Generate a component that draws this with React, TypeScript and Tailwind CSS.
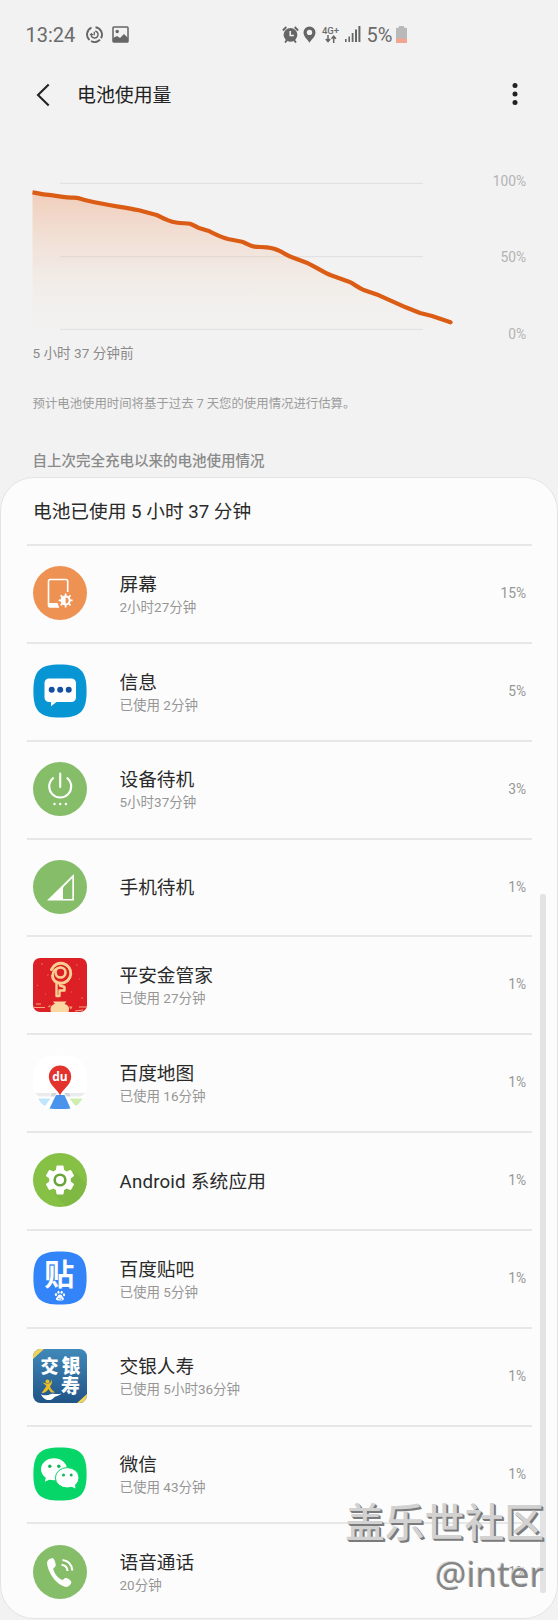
import React from "react";
import { MdSettings } from "react-icons/md";

type Usage = {
  name: string;
  detail?: string;
  percent: string;
  icon: React.ReactNode;
};

const SQUIRCLE = "M27 .4C47.3 .4 53.6 6.7 53.6 27S47.3 53.6 27 53.6 .4 47.3 .4 27 6.7 .4 27 .4Z";

function IconBox({ children }: { children: React.ReactNode }) {
  return (
    <svg viewBox="0 0 54 54" className="w-[54px] h-[54px] mb-[1.5px] block overflow-visible">
      {children}
    </svg>
  );
}

function ScreenIcon() {
  return (
    <IconBox>
      <circle cx="27" cy="27" r="27" fill="#ee9254" />
      <path d="M34.7 26V15.3a1.8 1.8 0 0 0-1.8-1.8H17.3a1.8 1.8 0 0 0-1.8 1.8v23.6a1.8 1.8 0 0 0 1.8 1.8H26" fill="none" stroke="#fff" strokeWidth="1.6" />
      <path d="M15 37h9.5l1.5 4.4h-9a2 2 0 0 1-2-2z" fill="#fff" />
      <g transform="translate(32.6 34.4)">
        <path d="M0-7v14M-7 0H7M-5-5 5 5M5-5-5 5" stroke="#fff" strokeWidth="1.7" />
        <circle r="5" fill="#fff" />
        <path d="M0-3a3 3 0 0 1 0 6z" fill="#ee9254" />
      </g>
    </IconBox>
  );
}

function MessageIcon() {
  return (
    <IconBox>
      <path d={SQUIRCLE} fill="#0795d3" />
      <path d="M16 14.5h22.5a4.5 4.5 0 0 1 4.5 4.5v14.5a4.5 4.5 0 0 1-4.5 4.5H23.5l-5.5 4.3v-4.3h-2a4.5 4.5 0 0 1-4.5-4.5V19a4.5 4.5 0 0 1 4.5-4.5z" fill="#fff" />
      <g fill="#1350a0">
        <circle cx="18.7" cy="25.8" r="3" />
        <circle cx="27.2" cy="25.8" r="3" />
        <circle cx="35.7" cy="25.8" r="3" />
      </g>
    </IconBox>
  );
}

function PowerIcon() {
  return (
    <IconBox>
      <circle cx="27" cy="27" r="27" fill="#86bd69" />
      <path d="M27.2 11.5v13.5M20 16.2a11 11 0 1 0 14.4 0" fill="none" stroke="#fff" strokeWidth="2.1" strokeLinecap="round" />
      <g fill="#fff">
        <circle cx="21.5" cy="42" r="1.2" />
        <circle cx="27.2" cy="42" r="1.2" />
        <circle cx="32.9" cy="42" r="1.2" />
      </g>
    </IconBox>
  );
}

function CellIcon() {
  return (
    <IconBox>
      <circle cx="27" cy="27" r="27" fill="#86bd69" />
      <path d="M14 40.5 41 14v26.5z" fill="#fff" />
      <path d="M30 27.5 39.3 18v21H30z" fill="#86bd69" />
    </IconBox>
  );
}

function PinganIcon() {
  return (
    <IconBox>
      <clipPath id="pingan"><rect width="54" height="54" rx="7" /></clipPath>
      <g clipPath="url(#pingan)">
        <rect width="54" height="54" fill="#dc2026" />
        <g fill="none" stroke="#f9ce92" strokeLinejoin="round" strokeLinecap="round">
          <path d="M18.500 11.500a10 10 0 1 1 9.500 13.700c-5 0-8.500-3.200-8.500-7.500" strokeWidth="3" />
          <circle cx="27.500" cy="14.500" r="5" strokeWidth="2.6" />
          <path d="M19.500 18c0-5 3-8 8-8.500" strokeWidth="2.2" />
          <path d="M23.500 24.500v13.500h3v-5.500h5V29l-4.500-1.500v-2.500" strokeWidth="2.4" />
        </g>
        <path d="M18 54c-1.500-4 .5-7.500 4-8l-2-2.500h13.500L31.500 46c4 1 5.500 4 4 8z" fill="#fbd8a1" />
        <path d="M17.5 47.5l-2 1.5M36 49h2.5l-1 2M0 49.5h12M3 46h5M42 53l8-1M46 49h8" stroke="#f4a77d" strokeWidth="1.2" fill="none" />
        <path d="M8 6h2M43 7h1.500M4 27.500h1M14 17h1.500M12 36h1M46 21h1M48 40h2M38 34h1" stroke="#f26c58" strokeWidth="1" />
      </g>
    </IconBox>
  );
}

function MapIcon() {
  return (
    <IconBox>
      <path d={SQUIRCLE} fill="#fff" />
      <path d="M1.5 38h17l-2.5 3.5H6zM36 38h16.500l-5 3.500h-9z" fill="#e9ebec" />
      <path d="M19 38h5l-3 3.500h-4zM31 38h5l2 3.500h-4.500z" fill="#d2d5d8" />
      <path d="M5 43.500h12.500L12 51c-3-1.500-5-4-7-7.500z" fill="#bfe6fb" />
      <path d="M36.500 43.500h13c-2 3.500-4 6-7 7.500z" fill="#cdeeb0" />
      <path d="M23 40h8.500L37.500 53.500C32 54.200 22 54.200 16.500 53.500z" fill="#4a93ec" />
      <path d="M27 41c-1-6-11.200-10.500-11.200-19.300a11.200 11.200 0 0 1 22.400 0C38.200 30.500 28 35 27 41z" fill="#e2332e" />
      <text x="27" y="26" textAnchor="middle" className="font-['Open_Sans',sans-serif] text-[12px] font-bold" fill="#fff">du</text>
    </IconBox>
  );
}

function GearIcon() {
  return (
    <IconBox>
      <circle cx="27" cy="27" r="27" fill="#86c044" />
      <path d="M21 41 33 53.3A27 27 0 0 0 53.500 31L41 18z" fill="#7fb843" />
      <g transform="translate(9 9)"><MdSettings size={36} color="#fff" /></g>
      <circle cx="27" cy="27" r="6.6" fill="#6ba539" />
      <circle cx="27" cy="27" r="4" fill="#fff" />
    </IconBox>
  );
}

function TiebaIcon() {
  return (
    <IconBox>
      <path d={SQUIRCLE} fill="#3384f8" />
      <text x="26.3" y="33.5" textAnchor="middle" className="font-['Noto_Sans_CJK_SC',sans-serif] text-[30px] font-bold" fill="#fff">贴</text>
      <g fill="#fff">
        <ellipse cx="23" cy="43.5" rx="1.2" ry="1.6" />
        <ellipse cx="25.5" cy="41.2" rx="1.1" ry="1.5" />
        <ellipse cx="28.7" cy="41.2" rx="1.1" ry="1.5" />
        <ellipse cx="31" cy="43.8" rx="1.1" ry="1.5" />
        <path d="M27 43.6c2 0 2 1.800 3.200 3 1.500 1.500.5 3-1.500 2.800h-3.600c-2 .2-3-1.300-1.500-2.800C25 45.400 25 43.600 27 43.600z" />
      </g>
      <path d="M25.3 47.5h1v1M28 46.5v2h1.2" stroke="#3384f8" strokeWidth=".7" fill="none" />
    </IconBox>
  );
}

function BocommIcon() {
  return (
    <IconBox>
      <defs>
        <linearGradient id="bocomm" x1="0" y1="0" x2="0" y2="1">
          <stop offset="0" stopColor="#4089b9" />
          <stop offset="1" stopColor="#215487" />
        </linearGradient>
        <clipPath id="bocommClip"><rect width="54" height="54" rx="7.5" /></clipPath>
      </defs>
      <g clipPath="url(#bocommClip)">
        <rect width="54" height="54" fill="url(#bocomm)" />
        <path d="M0 0h11L0 10zM54 54H44l10-9z" fill="#f0d35c" />
        <g className="font-['Noto_Sans_CJK_SC',sans-serif] font-black" fill="#fff">
          <text x="7.5" y="23.5" className="text-[18px]">交</text>
          <text x="28.5" y="24" className="text-[19px]">银</text>
          <text x="28" y="43.5" className="text-[19px]">寿</text>
        </g>
        <path d="M8 45c3 2.500 7 1 10 0 3.500-1 5 1 10.500-.5-3 3-5.500 2-7.500 4-3.500 4.500-10.500 3-13-3.500z" fill="#fff" />
        <circle cx="14.500" cy="32.500" r="2" fill="#eabd25" />
        <path d="M19 30c.5 4-1 6-2 7.500 1 3 3 4.500 5 6h-4l-2.500-3.500c-2 3-4.500 4.500-7 4l5-7-4-3.500 5 1.300c2.500-.3 4-2 4.500-4.800z" fill="#eabd25" />
      </g>
    </IconBox>
  );
}

function WechatIcon() {
  return (
    <IconBox>
      <path d={SQUIRCLE} fill="#05d667" />
      <path d="M13 30l-1.200 4.800 6-2.800z" fill="#fff" />
      <ellipse cx="21" cy="22.3" rx="13" ry="11" fill="#fff" />
      <ellipse cx="34.2" cy="30.8" rx="11.8" ry="10.2" fill="#fff" stroke="#05d667" strokeWidth="1" />
      <path d="M38 39.5l4.5 2-.8-5z" fill="#fff" />
      <g fill="#12b55c">
        <circle cx="16.8" cy="19.3" r="1.7" />
        <circle cx="25.8" cy="19.3" r="1.7" />
        <circle cx="30.5" cy="28" r="1.5" />
        <circle cx="38.2" cy="28" r="1.5" />
      </g>
    </IconBox>
  );
}

function CallIcon() {
  return (
    <IconBox>
      <circle cx="27" cy="27" r="27" fill="#86bd69" />
      <path d="M15.5 14.8c1.5-1.3 3-1.8 4.200-1.500 1.300.3 2.300 2.800 2.900 5.500.4 1.900 0 2.700-1 3.400-1.200.8-1.500 1.600-1.100 2.800 1.300 4 4 7.500 7.600 9.500 1 .6 1.900.4 2.800-.6.900-1.100 1.900-1.300 3.300-.6 2 1 3.800 2.500 4.100 3.600.3 1-1.200 3.400-3.300 4.600-1.700.9-4 .4-7-1.400C21.500 36.200 16.500 29 14.500 21c-.8-3.200-.4-5 1-6.200z" fill="#fff" />
      <path d="M28.500 19.800c3.500.3 5.700 2.600 6 6.200M29.500 15c5.700.7 9.300 4.500 9.800 10.500" fill="none" stroke="#fff" strokeWidth="2.1" />
    </IconBox>
  );
}

const usages: Usage[] = [
  { name: "屏幕", detail: "2小时27分钟", percent: "15%", icon: <ScreenIcon /> },
  { name: "信息", detail: "已使用 2分钟", percent: "5%", icon: <MessageIcon /> },
  { name: "设备待机", detail: "5小时37分钟", percent: "3%", icon: <PowerIcon /> },
  { name: "手机待机", percent: "1%", icon: <CellIcon /> },
  { name: "平安金管家", detail: "已使用 27分钟", percent: "1%", icon: <PinganIcon /> },
  { name: "百度地图", detail: "已使用 16分钟", percent: "1%", icon: <MapIcon /> },
  { name: "Android 系统应用", percent: "1%", icon: <GearIcon /> },
  { name: "百度贴吧", detail: "已使用 5分钟", percent: "1%", icon: <TiebaIcon /> },
  { name: "交银人寿", detail: "已使用 5小时36分钟", percent: "1%", icon: <BocommIcon /> },
  { name: "微信", detail: "已使用 43分钟", percent: "1%", icon: <WechatIcon /> },
  { name: "语音通话", detail: "20分钟", percent: "1%", icon: <CallIcon /> },
];

function StatusBar() {
  return (
    <div className="h-[68px] pl-[25.5px] flex items-center text-[20px] leading-none text-[#6b6b6b]">
      <span className="w-[60px] pt-[1px]">13:24</span>
      <svg viewBox="0 0 17 17" className="w-[17px] h-[17px]" fill="none" stroke="#666" strokeWidth="1.9">
        <path d="M5.5 1.7A7.400 7.400 0 0 0 3.500 14M5 15a7.400 7.400 0 0 0 9-1.300M15 12.200A7.400 7.400 0 0 0 9.500 1.200" />
        <path d="M9.3 5a3.6 3.6 0 1 1-4 5.2" strokeWidth="1.5" />
        <path d="M8.3 9.2V5.8M3.8 8.7h3.4M5.5 7v3.4" strokeWidth="1.3" />
      </svg>
      <svg viewBox="0 0 17 17" className="w-[17px] h-[17px] ml-[9px]">
        <rect x="1" y="1" width="15" height="15" rx=".8" fill="none" stroke="#666" strokeWidth="1.5" />
        <circle cx="5.2" cy="5.5" r="1.7" fill="#666" />
        <path d="M1 16v-4l4-2 3 2 4-4 4 4V16z" fill="#666" />
      </svg>
      <svg viewBox="0 0 17 17" className="w-[17px] h-[17px] ml-[153.5px]">
        <path d="M.9 4.5 4.3 1M16.1 4.5 12.7 1M3 16.5l2-2.500M14 16.500 12 14" stroke="#666" strokeWidth="1.9" />
        <circle cx="8.5" cy="8.8" r="6.9" fill="#666" />
        <path d="M8.2 5v4.5h3.7" fill="none" stroke="#f2f2f2" strokeWidth="1.5" />
      </svg>
      <svg viewBox="0 0 13 17" className="w-[13px] h-[17px] ml-[4px]">
        <path fillRule="evenodd" d="M6.500.4a6 6 0 0 1 6 6.100c0 4-4 7-6 10.200C4.500 13.500.5 10.500.5 6.500a6 6 0 0 1 6-6.100zm0 3.300a2.700 2.700 0 1 0 0 5.400 2.700 2.700 0 0 0 0-5.400z" fill="#666" />
      </svg>
      <div className="ml-[6px] w-[17px] flex flex-col items-center">
        <span className="text-[9.5px] leading-[9px] font-medium">4G+</span>
        <svg viewBox="0 0 12 8" className="w-[12px] h-[8px]" fill="none" stroke="#666" strokeWidth="1.5">
          <path d="M3 0v6.5M.8 4l2.200 2.500L5.200 4M8.700 8V1.200M6.500 3.700l2.200-2.500 2.200 2.500" />
        </svg>
      </div>
      <svg viewBox="0 0 16 16" className="w-[16px] h-[16px] ml-[5.5px]" fill="#666">
        <path d="M0 13h1.600v3H0zM3.400 10.500H5V16H3.400zM6.700 7h1.800v9H6.700zM10 3.500h2V16h-2zM13.400 0h2v16h-2z" />
      </svg>
      <span className="ml-[6px] pt-[2px] w-[26px]">5%</span>
      <svg viewBox="0 0 11 17" className="w-[11px] h-[17px] ml-[3.5px]">
        <path d="M3 0h5v1.8h2a1 1 0 0 1 1 1V17H0V2.800a1 1 0 0 1 1-1h2z" fill="#b9b9b9" />
        <path d="M0 12.5h11V17H0z" fill="#f1a590" />
      </svg>
    </div>
  );
}

const level = "M32.5 192.3C38 193 42 194.4 46 194.7C58 196 66 197.7 74 197.7C80 198 84 200 89 201C106 205 123 207 139 210.3L156.5 215C160 216.5 162 218 165.5 219.3C170 221 172 222 176 222.5C182 223.5 186 223 190 223.7C194 225 196 227 199 228L208 230.7C214 233.5 220 237 228 239L242 241.7C246 243 250 246 254.5 246.7C259 247.3 262 246.7 267 247.3C272 248 276 249 279 250.7C284 253 288 256 292 257.3L308 263.3C316 267 323 272 331 275.3L349 281.7C354 284 358 287.5 363 289.7L379 295.3L405.7 307.3L420 313L432 316L450.5 322.3";

function BatteryChart() {
  return (
    <div className="relative h-[220px]">
      <svg viewBox="0 150 558 220" className="w-[558px] h-[220px] block">
        <defs>
          <linearGradient id="level" x1="0" y1="192" x2="0" y2="328" gradientUnits="userSpaceOnUse">
            <stop offset="0" stopColor="#f0996c" stopOpacity=".42" />
            <stop offset="1" stopColor="#efe9d8" stopOpacity="0.05" />
          </linearGradient>
        </defs>
        <path d="M60 183.3h363M60 256.7h363M60 329.3h363" stroke="#e2e2e2" strokeWidth="1.3" />
        <path d={level + "V328H32.5Z"} fill="url(#level)" />
        <path d={level} fill="none" stroke="#da5c15" strokeWidth="4.2" strokeLinejoin="round" />
        <circle cx="450.5" cy="322.3" r="2.1" fill="#da5c15" />
      </svg>
      <div className="absolute right-[32px] top-[22.5px] h-[169px] flex flex-col justify-between items-end text-[13.8px] leading-[16px] text-[#b2b2b2]">
        <span>100%</span>
        <span>50%</span>
        <span>0%</span>
      </div>
      <div className="absolute left-[32.5px] top-[192.5px] text-[13.6px] leading-[20px] text-[#8a8a8a]">5 小时 37 分钟前</div>
    </div>
  );
}

export default function App() {
  return (
    <div className="relative w-[558px] h-[1620px] overflow-hidden bg-[#f2f2f2] flex flex-col whitespace-nowrap font-['Roboto','Noto_Sans_CJK_SC',sans-serif]">
      <StatusBar />
      <header className="h-[82px] pb-[28px] pl-[36px] pr-[38px] flex items-center text-[#222]">
        <svg viewBox="0 0 14 24" className="w-[14px] h-[24px] mb-[1px]" fill="none" stroke="#222" strokeWidth="2.1">
          <path d="M12.7 1.5 2 12l10.7 10.5" />
        </svg>
        <h1 className="ml-[27px] pt-[1px] flex-1 text-[18.9px] leading-[26px]">电池使用量</h1>
        <svg viewBox="0 0 10 24" className="w-[10px] h-[24px] mb-[2px]" fill="#222">
          <circle cx="5" cy="3.5" r="2.5" />
          <circle cx="5" cy="12" r="2.5" />
          <circle cx="5" cy="20.5" r="2.5" />
        </svg>
      </header>

      <BatteryChart />

      <p className="pl-[32.5px] pt-[24px] text-[12.4px] leading-[20px] text-[#9c9c9c]">预计电池使用时间将基于过去 7 天您的使用情况进行估算。</p>
      <h2 className="pl-[32.5px] pt-[37.5px] text-[14.5px] leading-[20px] font-medium text-[#8a8a8a]">自上次完全充电以来的电池使用情况</h2>

      <section className="mt-[5.5px] h-[1142px] rounded-[34px] border border-[#e4e4e4] bg-[#fcfcfc] pl-[26px] pr-[25px]">
        <h3 className="h-[66px] pl-[6px] pt-[21px] text-[18.7px] leading-[26px] text-[#2a2a2a]">电池已使用 5 小时 37 分钟</h3>
        {usages.map((u) => (
          <div key={u.name} className="h-[97.85px] border-t-2 border-[#e7e7e7] pl-[5.5px] pr-[6px] flex items-center">
            {u.icon}
            <div className="ml-[33px] pt-[1.5px] flex-1">
              <div className={`text-[18.7px] leading-[24px] text-[#2a2a2a] ${u.name.startsWith("Android") ? "tracking-[0.2px]" : ""}`}>{u.name}</div>
              {u.detail && <div className="text-[13.5px] leading-[20px] text-[#969696]">{u.detail}</div>}
            </div>
            <span className="pb-[1px] text-[13.8px] text-[#969696]">{u.percent}</span>
          </div>
        ))}
      </section>

      {/* scroll thumb */}
      <div className="absolute left-[540px] top-[893.5px] w-[5.5px] h-[699px] rounded-[2px] bg-[#e3e3e3]" />

      {/* community stamp */}
      <div className="absolute right-[14px] bottom-[20px] flex flex-col items-end font-['Noto_Sans','Noto_Sans_CJK_SC',sans-serif]">
        <span className="text-[39.8px] leading-[52px] font-medium text-[#d2d2d2] [text-shadow:1px_1px_0_#7b7b7b,2px_2px_0_#7b7b7b]">盖乐世社区</span>
        <span className="text-[35px] leading-[52px] text-[#858585] [text-shadow:-1px_-1px_0_#d8d8d8]">@inter</span>
      </div>
    </div>
  );
}
